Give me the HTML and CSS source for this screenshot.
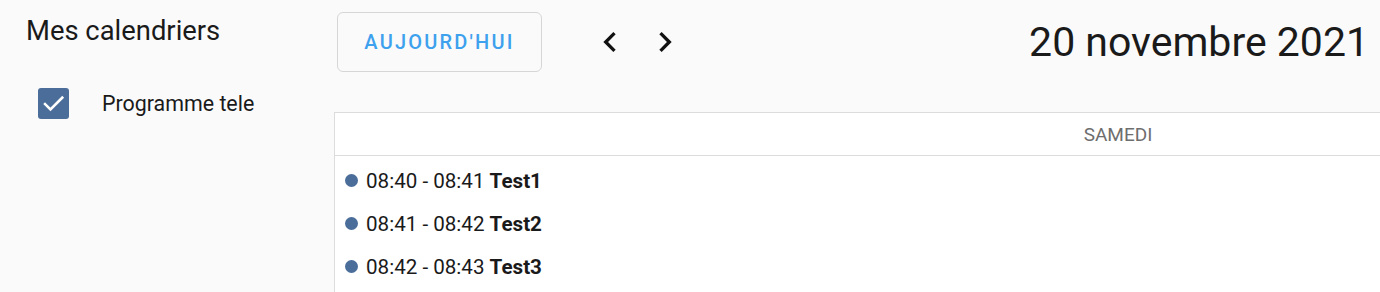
FILE: index.html
```html
<!DOCTYPE html>
<html lang="fr">
<head>
<meta charset="utf-8">
<title>Calendrier</title>
<link rel="stylesheet" href="styles.css">
</head>
<body>
<div class="app">
  <aside class="sidebar">
    <h2 class="side-title">Mes calendriers</h2>
    <label class="cal-item">
      <span class="checkbox">
        <svg viewBox="0 0 24 24" width="24" height="24"><path d="M4.5 12.5l4.8 4.8L19.8 6.8" fill="none" stroke="#fff" stroke-width="2.3" stroke-linecap="square"/></svg>
      </span>
      <span class="cal-name">Programme tele</span>
    </label>
  </aside>
  <main class="main">
    <div class="toolbar">
      <button class="today">AUJOURD'HUI</button>
      <div class="nav">
        <span class="nav-btn"><svg viewBox="0 0 24 24" width="40" height="40"><path d="M15.41 7.41L14 6l-6 6 6 6 1.41-1.41L10.83 12z" fill="#111"/></svg></span>
        <span class="nav-btn"><svg viewBox="0 0 24 24" width="40" height="40"><path d="M10 6L8.59 7.41 13.17 12l-4.58 4.59L10 18l6-6z" fill="#111"/></svg></span>
      </div>
      <h1 class="date-title">20 novembre 2021</h1>
    </div>
    <section class="panel">
      <div class="day-head">SAMEDI</div>
      <ul class="events">
        <li class="event"><span class="dot"></span>08:40 - 08:41&nbsp;<b>Test1</b></li>
        <li class="event"><span class="dot"></span>08:41 - 08:42&nbsp;<b>Test2</b></li>
        <li class="event"><span class="dot"></span>08:42 - 08:43&nbsp;<b>Test3</b></li>
      </ul>
    </section>
  </main>
</div>
</body>
</html>
```

FILE: styles.css
```css
html, body {
  margin: 0;
  padding: 0;
  background: #fafafa;
  overflow: hidden;
  font-family: Roboto, "Liberation Sans", Arial, sans-serif;
  color: #1a1a1a;
}

.app {
  display: flex;
  width: 1900px;
}

.sidebar {
  width: 334px;
  flex: none;
  box-sizing: border-box;
  padding: 13px 0 0 26px;
}

.side-title {
  margin: 0;
  font-size: 27.4px;
  font-weight: 400;
  line-height: 36px;
  color: #1a1a1a;
}

.cal-item {
  display: flex;
  align-items: center;
  margin-top: 39px;
  margin-left: 12px;
}

.checkbox {
  width: 31px;
  height: 31px;
  border-radius: 3px;
  background: #4a6d99;
  display: flex;
  align-items: center;
  justify-content: center;
}

.checkbox svg {
  width: 27px;
  height: 27px;
}

.cal-name {
  margin-left: 33px;
  font-size: 21.4px;
  color: #1a1a1a;
}

.main {
  flex: 1;
  min-width: 0;
}

.toolbar {
  display: flex;
  align-items: center;
  height: 84px;
  width: 1032px;
  padding-left: 3px;
  margin-bottom: 28px;
}

.today {
  height: 60px;
  width: 205px;
  box-sizing: border-box;
  border: 1px solid #d6d6d6;
  border-radius: 6px;
  background: #fafafa;
  color: #3ea1ee;
  font-family: Roboto, "Liberation Sans", Arial, sans-serif;
  font-size: 20px;
  font-weight: 500;
  letter-spacing: 2.2px;
  padding: 0;
}

.nav {
  display: flex;
  margin-left: 48px;
  gap: 15px;
}

.nav-btn {
  display: flex;
  width: 40px;
  height: 40px;
}

.date-title {
  margin: 0 0 0 auto;
  font-size: 41px;
  font-weight: 400;
  color: #1a1a1a;
}

.panel {
  width: 1566px;
  background: #fff;
  border-left: 1px solid #dcdcdc;
  border-top: 1px solid #dcdcdc;
  height: 200px;
}

.day-head {
  height: 42px;
  border-bottom: 1px solid #dcdcdc;
  display: flex;
  align-items: center;
  justify-content: center;
  font-size: 19px;
  color: #6e6e6e;
}

.events {
  list-style: none;
  margin: 0;
  padding: 3px 0 0 10px;
}

.event {
  display: flex;
  align-items: center;
  height: 43px;
  font-size: 20.6px;
  color: #1a1a1a;
}

.event b {
  font-weight: 700;
}

.dot {
  width: 13px;
  height: 13px;
  border-radius: 50%;
  background: #4a6d99;
  margin-right: 8px;
}
```
